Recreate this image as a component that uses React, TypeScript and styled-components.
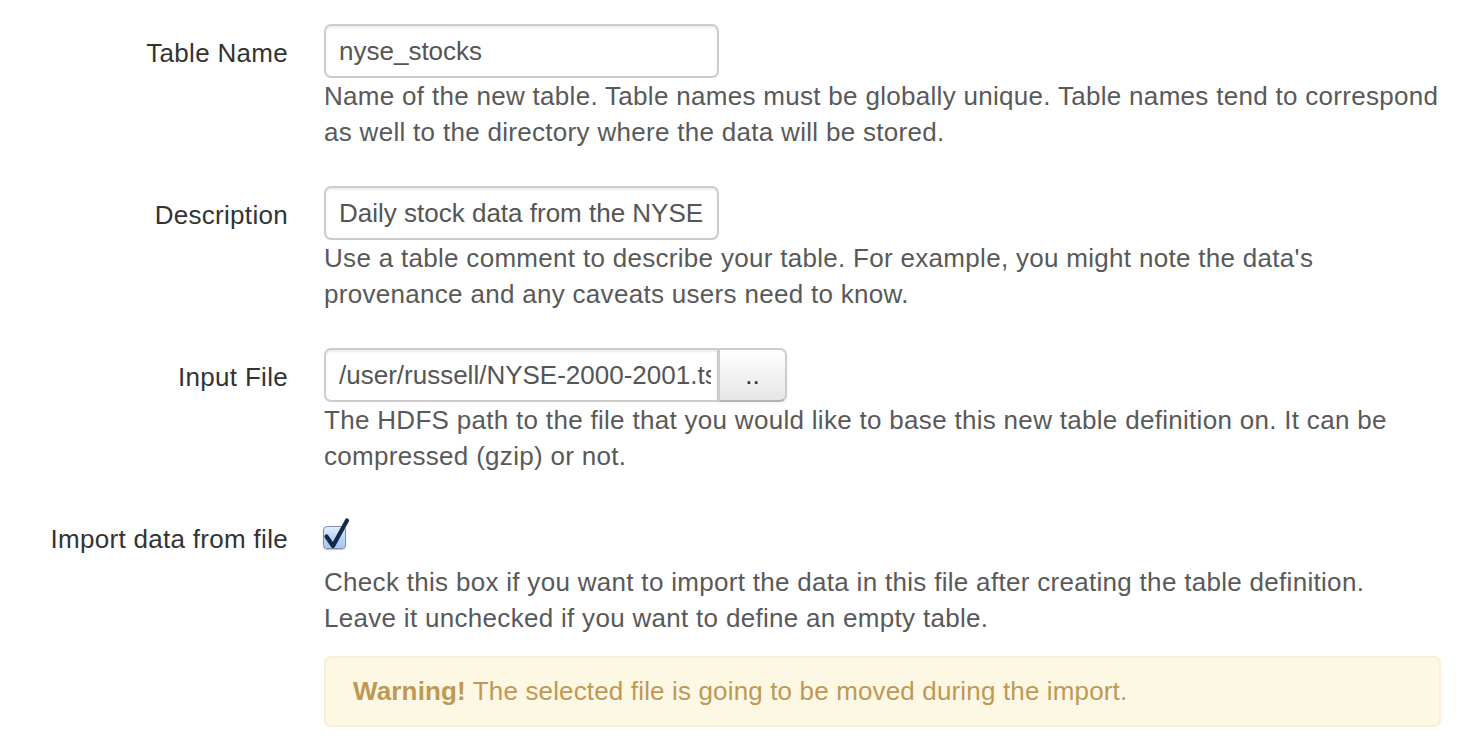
import React from "react";
import styled, { createGlobalStyle } from "styled-components";

const GlobalStyle = createGlobalStyle`
  html, body {
    margin: 0;
    padding: 0;
    background: #ffffff;
  }
  body {
    font-family: "Liberation Sans", Arial, sans-serif;
    font-size: 26px;
    line-height: 36px;
    letter-spacing: 0.3px;
    color: #333333;
  }
`;

const Form = styled.form`
  width: 1441px;
  padding-top: 24px;
  box-sizing: border-box;
`;

const ControlGroup = styled.div<{ $gap?: number }>`
  display: grid;
  grid-template-columns: 288px 1fr;
  column-gap: 36px;
  margin-bottom: ${(p) => (p.$gap ?? 36)}px;
`;

const Label = styled.label`
  text-align: right;
  padding-top: 11px;
  font-size: 26px;
  line-height: 36px;
  letter-spacing: 0.3px;
  color: #333333;
  white-space: nowrap;
`;

const Controls = styled.div`
  display: flex;
  flex-direction: column;
  align-items: flex-start;
  min-width: 0;
`;

const TextInput = styled.input<{ $appended?: boolean }>`
  width: 395px;
  height: 54px;
  box-sizing: border-box;
  padding: 0 6px 0 13px;
  font-family: "Liberation Sans", Arial, sans-serif;
  font-size: 26px;
  letter-spacing: 0;
  color: #555555;
  background: #ffffff;
  border: 2px solid #cccccc;
  border-radius: ${(p) => (p.$appended ? "7px 0 0 7px" : "7px")};
  box-shadow: inset 0 2px 2px rgba(0, 0, 0, 0.075);
  outline: none;
`;

const InputAppend = styled.div`
  display: flex;
  align-items: stretch;
`;

const AddonButton = styled.button`
  width: 69px;
  height: 54px;
  box-sizing: border-box;
  margin-left: -1px;
  font-family: "Liberation Sans", Arial, sans-serif;
  font-size: 26px;
  color: #333333;
  background: linear-gradient(to bottom, #ffffff, #e6e6e6);
  border: 2px solid #cccccc;
  border-bottom-color: #b3b3b3;
  border-radius: 0 7px 7px 0;
  box-shadow: inset 0 1px 0 rgba(255, 255, 255, 0.2), 0 1px 2px rgba(0, 0, 0, 0.05);
  padding: 0;
  line-height: 1;
`;

const HelpBlock = styled.p`
  margin: 0;
  font-size: 26px;
  line-height: 36px;
  letter-spacing: 0.3px;
  color: #595959;
  white-space: nowrap;
`;

const CheckboxRow = styled.div`
  height: 54px;
  display: flex;
  align-items: flex-start;
  padding-top: 16px;
  box-sizing: border-box;
`;

const CheckBox = styled.span`
  position: relative;
  display: inline-block;
  width: 21px;
  height: 21px;
  margin-left: -1px;
  border: 1px solid #7d8ea6;
  border-radius: 4px;
  background: linear-gradient(to bottom, #e2efff 0%, #b6d4f7 55%, #a3c8f3 100%);
  box-shadow: 0 1px 1px rgba(0, 0, 0, 0.25), inset 0 0 1px rgba(255, 255, 255, 0.8);
`;

const CheckMark = styled.svg`
  position: absolute;
  left: -2px;
  top: -8px;
  width: 28px;
  height: 32px;
  overflow: visible;
`;

const Alert = styled.div`
  margin-top: 20px;
  width: 100%;
  box-sizing: border-box;
  padding: 15px 63px 16px 27px;
  font-size: 26px;
  line-height: 36px;
  letter-spacing: 0.15px;
  color: #c09853;
  background: #fcf8e3;
  border: 2px solid #fbeed5;
  border-radius: 7px;
  text-shadow: 0 1px 0 rgba(255, 255, 255, 0.5);
`;

const Strong = styled.strong`
  font-weight: bold;
`;

export default function App() {
  return (
    <>
      <GlobalStyle />
      <Form onSubmit={(e) => e.preventDefault()}>
        <ControlGroup>
          <Label>Table Name</Label>
          <Controls>
            <TextInput type="text" defaultValue="nyse_stocks" readOnly />
            <HelpBlock>
              Name of the new table. Table names must be globally unique. Table names tend to correspond
              <br />
              as well to the directory where the data will be stored.
            </HelpBlock>
          </Controls>
        </ControlGroup>

        <ControlGroup>
          <Label>Description</Label>
          <Controls>
            <TextInput type="text" defaultValue="Daily stock data from the NYSE" readOnly />
            <HelpBlock>
              Use a table comment to describe your table. For example, you might note the data's
              <br />
              provenance and any caveats users need to know.
            </HelpBlock>
          </Controls>
        </ControlGroup>

        <ControlGroup>
          <Label>Input File</Label>
          <Controls>
            <InputAppend>
              <TextInput $appended type="text" defaultValue="/user/russell/NYSE-2000-2001.tsv" readOnly />
              <AddonButton type="button">..</AddonButton>
            </InputAppend>
            <HelpBlock>
              The HDFS path to the file that you would like to base this new table definition on. It can be
              <br />
              compressed (gzip) or not.
            </HelpBlock>
          </Controls>
        </ControlGroup>

        <ControlGroup $gap={0}>
          <Label>Import data from file</Label>
          <Controls>
            <CheckboxRow>
              <CheckBox role="checkbox" aria-checked="true">
                <CheckMark viewBox="0 0 28 32">
                  <path
                    d="M4.5 17.5 L11 27 L25 1.5"
                    fill="none"
                    stroke="#13284a"
                    strokeWidth="4.2"
                    strokeLinecap="round"
                    strokeLinejoin="round"
                  />
                </CheckMark>
              </CheckBox>
            </CheckboxRow>
            <HelpBlock>
              Check this box if you want to import the data in this file after creating the table definition.
              <br />
              Leave it unchecked if you want to define an empty table.
            </HelpBlock>
            <Alert>
              <Strong>Warning!</Strong> The selected file is going to be moved during the import.
            </Alert>
          </Controls>
        </ControlGroup>
      </Form>
    </>
  );
}
